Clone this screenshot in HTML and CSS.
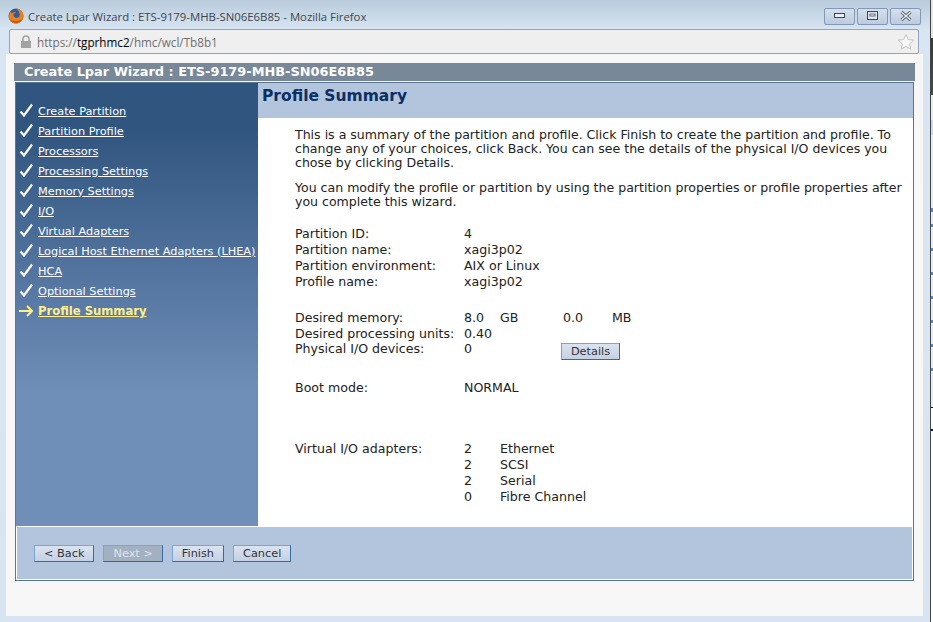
FILE: index.html
```html
<!DOCTYPE html>
<html lang="en">
<head>
    <meta charset="UTF-8">
    <title>Create Lpar Wizard : ETS-9179-MHB-SN06E6B85 - Mozilla Firefox</title>
    <link rel="stylesheet" href="styles.css">
</head>
<body>
    <svg class="defs" width="0" height="0">
        <symbol id="check" viewBox="0 0 14 14">
            <path d="M1.500 8.500L5 12.500 13 1.500" fill="none" stroke="#fff" stroke-width="2.200"/>
        </symbol>
    </svg>
    <div class="window">
        <!-- Browser title bar -->
        <div class="titlebar">
            <svg class="fox" width="16" height="16" viewBox="0 0 16 16">
                <circle cx="8" cy="8" r="7.500" fill="#2d5c9e"/>
                <path d="M8 .5a7.500 7.500 0 1 1-7.300 9.200C1 6 2 4.500 3 3.500c0 1 .4 1.600 1 2C5 4 7 3.800 8 4.500c-1.500.2-2.500 1-2.500 2.500 0 2 2 3 3.500 2.800 2-.3 3-2 2.500-4.300C11 3 9.500 1.500 8 .5z" fill="#e8801c"/>
                <path d="M2 11c1.500 3 5 4.500 8 3.500 1.500-.5 3-1.800 3.800-3.500-1.500 1.500-4 2.500-6.300 2.200C5 13 3.300 12.200 2 11z" fill="#c9480f"/>
            </svg>
            <span class="title-text">Create Lpar Wizard : ETS-9179-MHB-SN06E6B85 - Mozilla Firefox</span>
            <div class="win-buttons">
                <div class="win-btn">
                    <svg width="12" height="6" viewBox="0 0 12 6"><rect x=".5" y=".5" width="10" height="4" fill="#e8eef5" stroke="#3c4654"/></svg>
                </div>
                <div class="win-btn">
                    <svg width="12" height="10" viewBox="0 0 12 10"><rect x=".5" y=".5" width="10" height="8" fill="#dfe7f0" stroke="#3c4654"/><rect x="3" y="3" width="5" height="2" fill="#fff" stroke="#3c4654" stroke-width=".8"/></svg>
                </div>
                <div class="win-btn">
                    <svg width="12" height="10" viewBox="0 0 12 10"><path d="M1.500 1l9 8M10.500 1l-9 8" stroke="#3c4654" stroke-width="3"/><path d="M1.500 1l9 8M10.500 1l-9 8" stroke="#eef2f7" stroke-width="1.400"/></svg>
                </div>
            </div>
        </div>

        <!-- Address bar -->
        <div class="urlbar">
            <svg class="lock" width="12" height="14" viewBox="0 0 12 14">
                <path d="M3 6V4a3 3 0 0 1 6 0v2" fill="none" stroke="#a3a3a3" stroke-width="1.500"/>
                <rect x="1" y="6" width="10" height="7" fill="#a3a3a3"/>
            </svg>
            <span class="url">https://<b>tgprhmc2</b>/hmc/wcl/Tb8b1</span>
            <svg class="star" width="18" height="18" viewBox="0 0 18 18">
                <path d="M9 1.500l2.300 5 5.400.6-4 3.700 1.100 5.400L9 13.500l-4.800 2.700 1.100-5.400-4-3.700 5.400-.6z" fill="#f6f6f6" stroke="#c4c4c4"/>
            </svg>
        </div>

        <div class="page">
            <div class="wizard-title">Create Lpar Wizard : ETS-9179-MHB-SN06E6B85</div>
            <div class="wizard">
                <div class="wizard-main">
                    <ul class="steps">
                        <li class="step"><svg class="check"><use href="#check"/></svg><a href="#">Create Partition</a></li>
                        <li class="step"><svg class="check"><use href="#check"/></svg><a href="#">Partition Profile</a></li>
                        <li class="step"><svg class="check"><use href="#check"/></svg><a href="#">Processors</a></li>
                        <li class="step"><svg class="check"><use href="#check"/></svg><a href="#">Processing Settings</a></li>
                        <li class="step"><svg class="check"><use href="#check"/></svg><a href="#">Memory Settings</a></li>
                        <li class="step"><svg class="check"><use href="#check"/></svg><a href="#">I/O</a></li>
                        <li class="step"><svg class="check"><use href="#check"/></svg><a href="#">Virtual Adapters</a></li>
                        <li class="step"><svg class="check"><use href="#check"/></svg><a href="#">Logical Host Ethernet Adapters (LHEA)</a></li>
                        <li class="step"><svg class="check"><use href="#check"/></svg><a href="#">HCA</a></li>
                        <li class="step"><svg class="check"><use href="#check"/></svg><a href="#">Optional Settings</a></li>
                        <li class="step current">
                            <svg class="arrow" width="15" height="12" viewBox="0 0 15 12"><path d="M0 6h13M8 1l5 5-5 5" fill="none" stroke="#ffef8a" stroke-width="2"/></svg>
                            <a href="#">Profile Summary</a>
                        </li>
                    </ul>
                    <div class="content">
                        <h1>Profile Summary</h1>
                        <div class="content-body">
                            <p class="intro">This is a summary of the partition and profile. Click Finish to create the partition and profile. To change any of your choices, click Back. You can see the details of the physical I/O devices you chose by clicking Details.</p>
                            <p class="intro second">You can modify the profile or partition by using the partition properties or profile properties after you complete this wizard.</p>

                            <div class="rows first">
                                <div class="row"><span class="label">Partition ID:</span><span>4</span></div>
                                <div class="row"><span class="label">Partition name:</span><span>xagi3p02</span></div>
                                <div class="row"><span class="label">Partition environment:</span><span>AIX or Linux</span></div>
                                <div class="row"><span class="label">Profile name:</span><span>xagi3p02</span></div>
                            </div>

                            <div class="rows memory">
                                <div class="row"><span class="label">Desired memory:</span><span class="num">8.0</span><span class="unit">GB</span><span class="num-wide">0.0</span><span>MB</span></div>
                                <div class="row"><span class="label">Desired processing units:</span><span>0.40</span></div>
                                <div class="row io-row"><span class="label">Physical I/O devices:</span><span class="io-count">0</span><button class="btn details">Details</button></div>
                            </div>

                            <div class="rows boot">
                                <div class="row"><span class="label">Boot mode:</span><span>NORMAL</span></div>
                            </div>

                            <div class="rows adapters">
                                <div class="row"><span class="label">Virtual I/O adapters:</span><span class="count">2</span><span>Ethernet</span></div>
                                <div class="row"><span class="label"></span><span class="count">2</span><span>SCSI</span></div>
                                <div class="row"><span class="label"></span><span class="count">2</span><span>Serial</span></div>
                                <div class="row"><span class="label"></span><span class="count">0</span><span>Fibre Channel</span></div>
                            </div>
                        </div>
                    </div>
                </div>
                <div class="wizard-buttons">
                    <button class="btn">&lt; Back</button>
                    <button class="btn disabled">Next &gt;</button>
                    <button class="btn">Finish</button>
                    <button class="btn">Cancel</button>
                </div>
            </div>
        </div>
    </div>
    <div class="desktop-edge"></div>
</body>
</html>
```

FILE: styles.css
```css
html, body {
    height: 100%;
}
body {
    margin: 0;
    display: flex;
    overflow: hidden;
    background-color: #d9d9d9;
    font-family: "DejaVu Sans", Verdana, sans-serif;
}
.defs {
    position: absolute;
}
.window {
    width: 930px;
    height: 622px;
    flex-shrink: 0;
    box-sizing: border-box;
    padding: 0 7px 6px 6px;
    display: flex;
    flex-direction: column;
    background: linear-gradient(to bottom, #b9cbdb 0, #d8e5f3 30px, #d8e4f2 100%);
}
.desktop-edge {
    width: 3px;
    box-sizing: border-box;
    border-left: 1px solid #444;
    background: linear-gradient(to bottom,
        #e6e6e6 0, #e6e6e6 38px,
        #3a3a3a 38px, #4a4a4a 95px,
        #ececec 95px, #ececec 120px,
        #d5d5e8 120px, #d5d5e8 135px,
        #ececec 135px, #ececec 208px,
        #3f8fe0 208px, #3f8fe0 212px,
        #ececec 212px, #ececec 224px,
        #3f8fe0 224px, #3f8fe0 227px,
        #ececec 227px, #ececec 248px,
        #3f8fe0 248px, #3f8fe0 251px,
        #ececec 251px, #ececec 272px,
        #3f8fe0 272px, #3f8fe0 275px,
        #ececec 275px, #ececec 296px,
        #3f8fe0 296px, #3f8fe0 299px,
        #ececec 299px, #ececec 320px,
        #3f8fe0 320px, #3f8fe0 323px,
        #ececec 323px, #ececec 344px,
        #3f8fe0 344px, #3f8fe0 347px,
        #ececec 347px, #ececec 368px,
        #3f8fe0 368px, #3f8fe0 371px,
        #ececec 371px, #ececec 407px,
        #111 407px, #111 408px,
        #fff 408px, #fff 429px,
        #101080 429px, #101080 431px,
        #fff 431px, #fff 100%);
}
.titlebar {
    height: 29px;
    box-sizing: border-box;
    padding-top: 3px;
    display: flex;
    align-items: center;
    flex-shrink: 0;
}
.fox {
    margin: 0 4px 0 2px;
}
.title-text {
    font-family: "Open Sans", "Liberation Sans", sans-serif;
    font-size: 11.35px;
    color: #3c4650;
}
.win-buttons {
    margin-left: auto;
    margin-right: 2px;
    display: flex;
    gap: 2px;
}
.win-btn {
    width: 29px;
    height: 15px;
    border: 1px solid #8497b4;
    border-radius: 2px;
    display: flex;
    align-items: center;
    justify-content: center;
    background: linear-gradient(to bottom, #d5e0ed, #bccbde);
}
.urlbar {
    height: 23px;
    flex-shrink: 0;
    margin: 0 4px 0 3px;
    padding: 0 3px 0 10px;
    border: 1px solid #98a4b6;
    border-radius: 2px;
    display: flex;
    align-items: center;
    background-color: #efefef;
}
.lock {
    margin-right: 5px;
}
.url {
    font-family: "Open Sans", "Liberation Sans", sans-serif;
    font-size: 11.7px;
    color: #6e6e6e;
}
.url b {
    font-weight: normal;
    color: #000;
}
.star {
    margin-left: auto;
}
.page {
    flex: 1;
    background-color: #f7f7f7;
    padding: 9px 8px 0 8px;
}
.wizard-title {
    height: 18px;
    line-height: 18px;
    padding-left: 10px;
    font-size: 12.9px;
    font-weight: bold;
    color: #fff;
    background-color: #788898;
}
.wizard {
    width: 899px;
    margin-left: 1px;
    margin-top: 1px;
    border: 1px solid #5a7594;
    box-sizing: border-box;
}
.wizard-main {
    display: flex;
    height: 443px;
    background-color: #fff;
}
.steps {
    width: 242px;
    flex-shrink: 0;
    box-sizing: border-box;
    margin: 0;
    padding: 18px 0 0 3px;
    list-style: none;
    background: linear-gradient(to bottom, #30557f 0, #30557f 10%, #6f8eb8 70%, #6f8eb8 100%);
}
.step {
    height: 20px;
    display: flex;
    align-items: center;
    font-size: 11.3px;
}
.step a {
    color: #fff;
    white-space: nowrap;
}
.check {
    width: 14px;
    height: 14px;
    margin: -3px 5px 0 0;
    flex-shrink: 0;
}
.current a {
    color: #ffef8a;
    font-size: 11.6px;
    font-weight: bold;
}
.arrow {
    margin-right: 4px;
}
.content {
    flex: 1;
    min-width: 0;
}
.content h1 {
    margin: 0;
    height: 35px;
    padding: 4px 0 0 4px;
    box-sizing: border-box;
    font-size: 15.5px;
    font-weight: bold;
    color: #0a2f63;
    background-color: #b3c4dd;
}
.content-body {
    padding: 10px 4px 0 37px;
    font-size: 12.6px;
    line-height: 16px;
    color: #222;
}
.intro {
    margin: 0;
    font-size: 12.55px;
    line-height: 14px;
}
.intro.second {
    margin-top: 11px;
}
.rows.first {
    margin-top: 17px;
}
.rows.memory {
    margin-top: 20px;
}
.rows.boot {
    margin-top: 23px;
}
.rows.adapters {
    margin-top: 45px;
}
.row {
    display: flex;
    align-items: center;
    height: 16px;
}
.io-row {
    margin-top: -1px;
}
.label {
    width: 169px;
    flex-shrink: 0;
}
.num {
    width: 36px;
}
.unit {
    width: 63px;
}
.num-wide {
    width: 49px;
}
.count {
    width: 36px;
}
.io-count {
    width: 97px;
}
.btn {
    padding: 0 9px;
    height: 17px;
    font-family: "DejaVu Sans", Verdana, sans-serif;
    font-size: 11.3px;
    color: #333;
    border: 1px solid #7ba5cf;
    border-right-color: #376b9f;
    border-bottom-color: #376b9f;
    background: linear-gradient(to bottom, #dbe3f0, #c4d0e4);
}
.btn.details {
    width: 59px;
    padding: 0;
    margin-top: 4px;
}
.btn.disabled {
    color: #dfe4ec;
    background: #a2b0c2;
}
.wizard-buttons {
    height: 54px;
    box-sizing: border-box;
    display: flex;
    align-items: center;
    gap: 9px;
    padding: 0 0 0 17px;
    border: 1px solid #fff;
    background-color: #b3c4dd;
}
```
